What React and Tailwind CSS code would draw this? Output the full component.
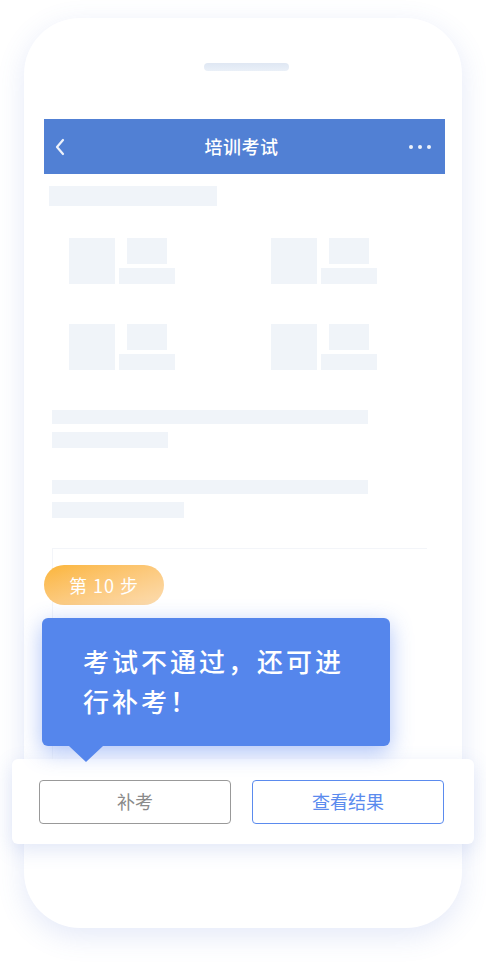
import React from 'react';

const font = { fontFamily: '"Noto Sans CJK SC", "Noto Sans", sans-serif' };

const Tile = () => (
  <div className="flex gap-[4px]">
    <div className="w-[46px] h-[46px] bg-[#f0f4f9]" />
    <div className="flex flex-col items-center gap-[4px]">
      <div className="w-[40px] h-[26px] bg-[#f0f4f9]" />
      <div className="w-[56px] h-[16px] bg-[#f0f4f9]" />
    </div>
  </div>
);

const App = () => {
  return (
    <div className="w-[486px] h-[970px] bg-white pt-[18px]" style={font}>
      <div className="mx-6 h-[910px] rounded-[56px] bg-white shadow-[0_8px_28px_rgba(90,120,210,0.16)] flex flex-col">
        {/* speaker */}
        <div className="mt-[45px] ml-[180px] w-[85px] h-[8px] rounded-full bg-gradient-to-b from-[#dfe7f3] to-[#eaf0f8]" />

        {/* header */}
        <div className="mt-[48px] ml-[20px] w-[401px] h-[55px] bg-[#5180d4] flex items-center justify-between px-[10px]">
          <svg width="12" height="18" viewBox="0 0 12 18" fill="none">
            <path d="M9 2 L3 9 L9 16" stroke="#eef2fb" strokeWidth="2.2" strokeLinecap="round" strokeLinejoin="round" />
          </svg>
          <span className="ml-[8px] text-white text-[18px] font-medium tracking-[0.5px]">培训考试</span>
          <div className="flex gap-[5px] pr-[4px]">
            <span className="w-[4px] h-[4px] rounded-full bg-[#eef2fb]" />
            <span className="w-[4px] h-[4px] rounded-full bg-[#eef2fb]" />
            <span className="w-[4px] h-[4px] rounded-full bg-[#eef2fb]" />
          </div>
        </div>

        {/* skeleton */}
        <div className="ml-[25px] mt-[12px] w-[168px] h-[20px] bg-[#f0f4f9]" />
        <div className="ml-[45px] mt-[32px] grid grid-cols-[202px_auto] gap-y-[40px]">
          <Tile />
          <Tile />
          <Tile />
          <Tile />
        </div>
        <div className="ml-[28px] mt-[40px] flex flex-col">
          <div className="w-[316px] h-[14px] bg-[#f0f4f9]" />
          <div className="mt-[8px] w-[116px] h-[16px] bg-[#f0f4f9]" />
          <div className="mt-[32px] w-[316px] h-[14px] bg-[#f0f4f9]" />
          <div className="mt-[8px] w-[132px] h-[16px] bg-[#f0f4f9]" />
        </div>

        {/* faint card with guide overlay */}
        <div className="relative mt-[30px] ml-[28px] w-[375px] h-[211px] border-l border-t border-[#f3f5f9]">
          <div className="absolute left-[-9px] top-[16px] w-[120px] h-[40px] rounded-full bg-gradient-to-br from-[#fbb535] to-[#fcdcb0] flex items-center justify-center text-white text-[18px] tracking-[1px]">
            第 10 步
          </div>
          <div className="absolute left-[-11px] top-[69px] w-[348px] h-[128px] rounded-[6px] bg-[#5586ec] shadow-[0_6px_22px_rgba(70,120,240,0.45)] pl-[41px] pt-[23px] z-10">
            <p className="text-white text-[26px] font-medium leading-[40px] tracking-[3px]">
              考试不通过，还可进
              <br />
              行补考！
            </p>
            <div className="absolute left-[27px] bottom-[-16px] w-0 h-0 border-l-[17px] border-r-[17px] border-t-[16px] border-l-transparent border-r-transparent border-t-[#5586ec]" />
          </div>
        </div>

        {/* bottom actions */}
        <div className="-mx-3 h-[85px] rounded-[6px] bg-white shadow-[0_6px_20px_rgba(90,120,210,0.18)] flex items-center gap-[21px] px-[27px]">
          <button className="w-[192px] h-[44px] rounded-[4px] border border-[#999999] text-[#8a8a8a] text-[18px]">补考</button>
          <button className="w-[192px] h-[44px] rounded-[4px] border border-[#5b8bee] text-[#5b8bee] text-[18px]">查看结果</button>
        </div>
      </div>
    </div>
  );
};

export default App;
